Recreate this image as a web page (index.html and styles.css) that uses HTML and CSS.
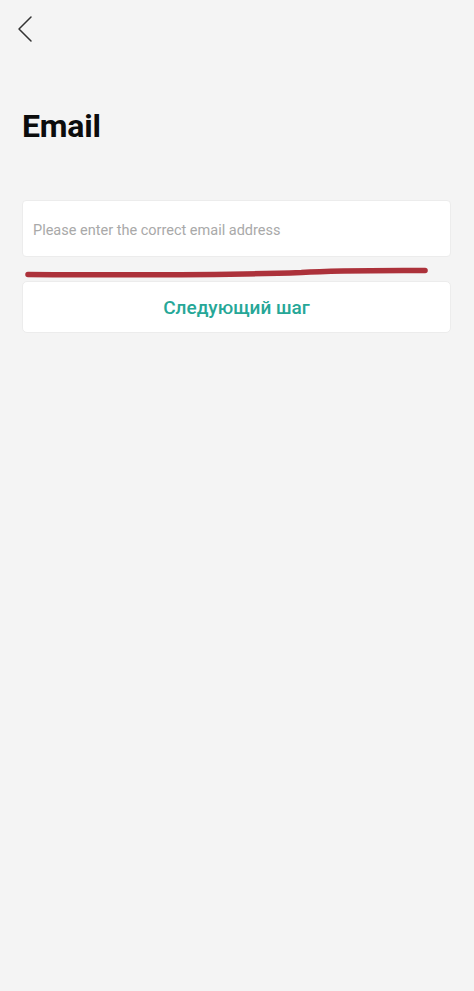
FILE: index.html
```html
<!DOCTYPE html>
<html lang="ru">
<head>
<meta charset="utf-8">
<title>Email</title>
<link rel="stylesheet" href="styles.css">
</head>
<body>
<div class="page">
  <header class="topbar">
    <button class="back" aria-label="Back">
      <svg width="16" height="28" viewBox="0 0 16 28"><path d="M14 2 L2 14 L14 26" fill="none" stroke="#333" stroke-width="1.5" stroke-linecap="round" stroke-linejoin="round"/></svg>
    </button>
  </header>
  <h1 class="title">Email</h1>
  <div class="form">
    <div class="field">
      <input class="input" type="email" placeholder="Please enter the correct email address">
    </div>
    <div class="mark">
      <svg width="430" height="24" viewBox="0 0 430 24"><path d="M6 17.5 C 80 18, 200 18.5, 280 15.5 C 320 13, 380 13.5, 404 13.5" fill="none" stroke="#a8262f" stroke-width="5.5" stroke-linecap="round" opacity="0.95"/></svg>
    </div>
    <button class="next">Следующий шаг</button>
  </div>
</div>
</body>
</html>
```
FILE: styles.css
```css
html, body {
  margin: 0;
  padding: 0;
  background: #f4f4f4;
}
body {
  font-family: Roboto, "Noto Sans", "Liberation Sans", sans-serif;
  color: #111;
}
.page {
  min-height: 991px;
  padding: 0 23px 0 22px;
  box-sizing: border-box;
}
.topbar {
  height: 60px;
  display: flex;
  align-items: flex-start;
}
.back {
  margin: 15px 0 0 -5px;
  padding: 0;
  border: 0;
  background: none;
  width: 16px;
  height: 28px;
  display: flex;
}
.title {
  margin: 46px 0 0 0;
  font-size: 32px;
  font-weight: 700;
  line-height: 40px;
  color: #0c0c0c;
  letter-spacing: -0.2px;
}
.form {
  margin-top: 54px;
  display: flex;
  flex-direction: column;
}
.field {
  height: 57px;
  background: #fff;
  border: 1px solid #ececec;
  border-radius: 4px;
  box-sizing: border-box;
  display: flex;
  align-items: center;
}
.input {
  flex: 1;
  border: 0;
  outline: none;
  background: transparent;
  padding: 3px 0 0 10px;
  font-family: inherit;
  font-size: 14.5px;
  color: #333;
  height: 100%;
  box-sizing: border-box;
}
.input::placeholder {
  color: #a9a9a9;
}
.mark {
  height: 24px;
  display: flex;
  filter: blur(0.7px);
}
.next {
  height: 52px;
  background: #fff;
  border: 1px solid #ececec;
  border-radius: 5px;
  box-sizing: border-box;
  font-family: inherit;
  font-size: 19px;
  font-weight: 500;
  color: #26a797;
  padding: 0;
}
```
